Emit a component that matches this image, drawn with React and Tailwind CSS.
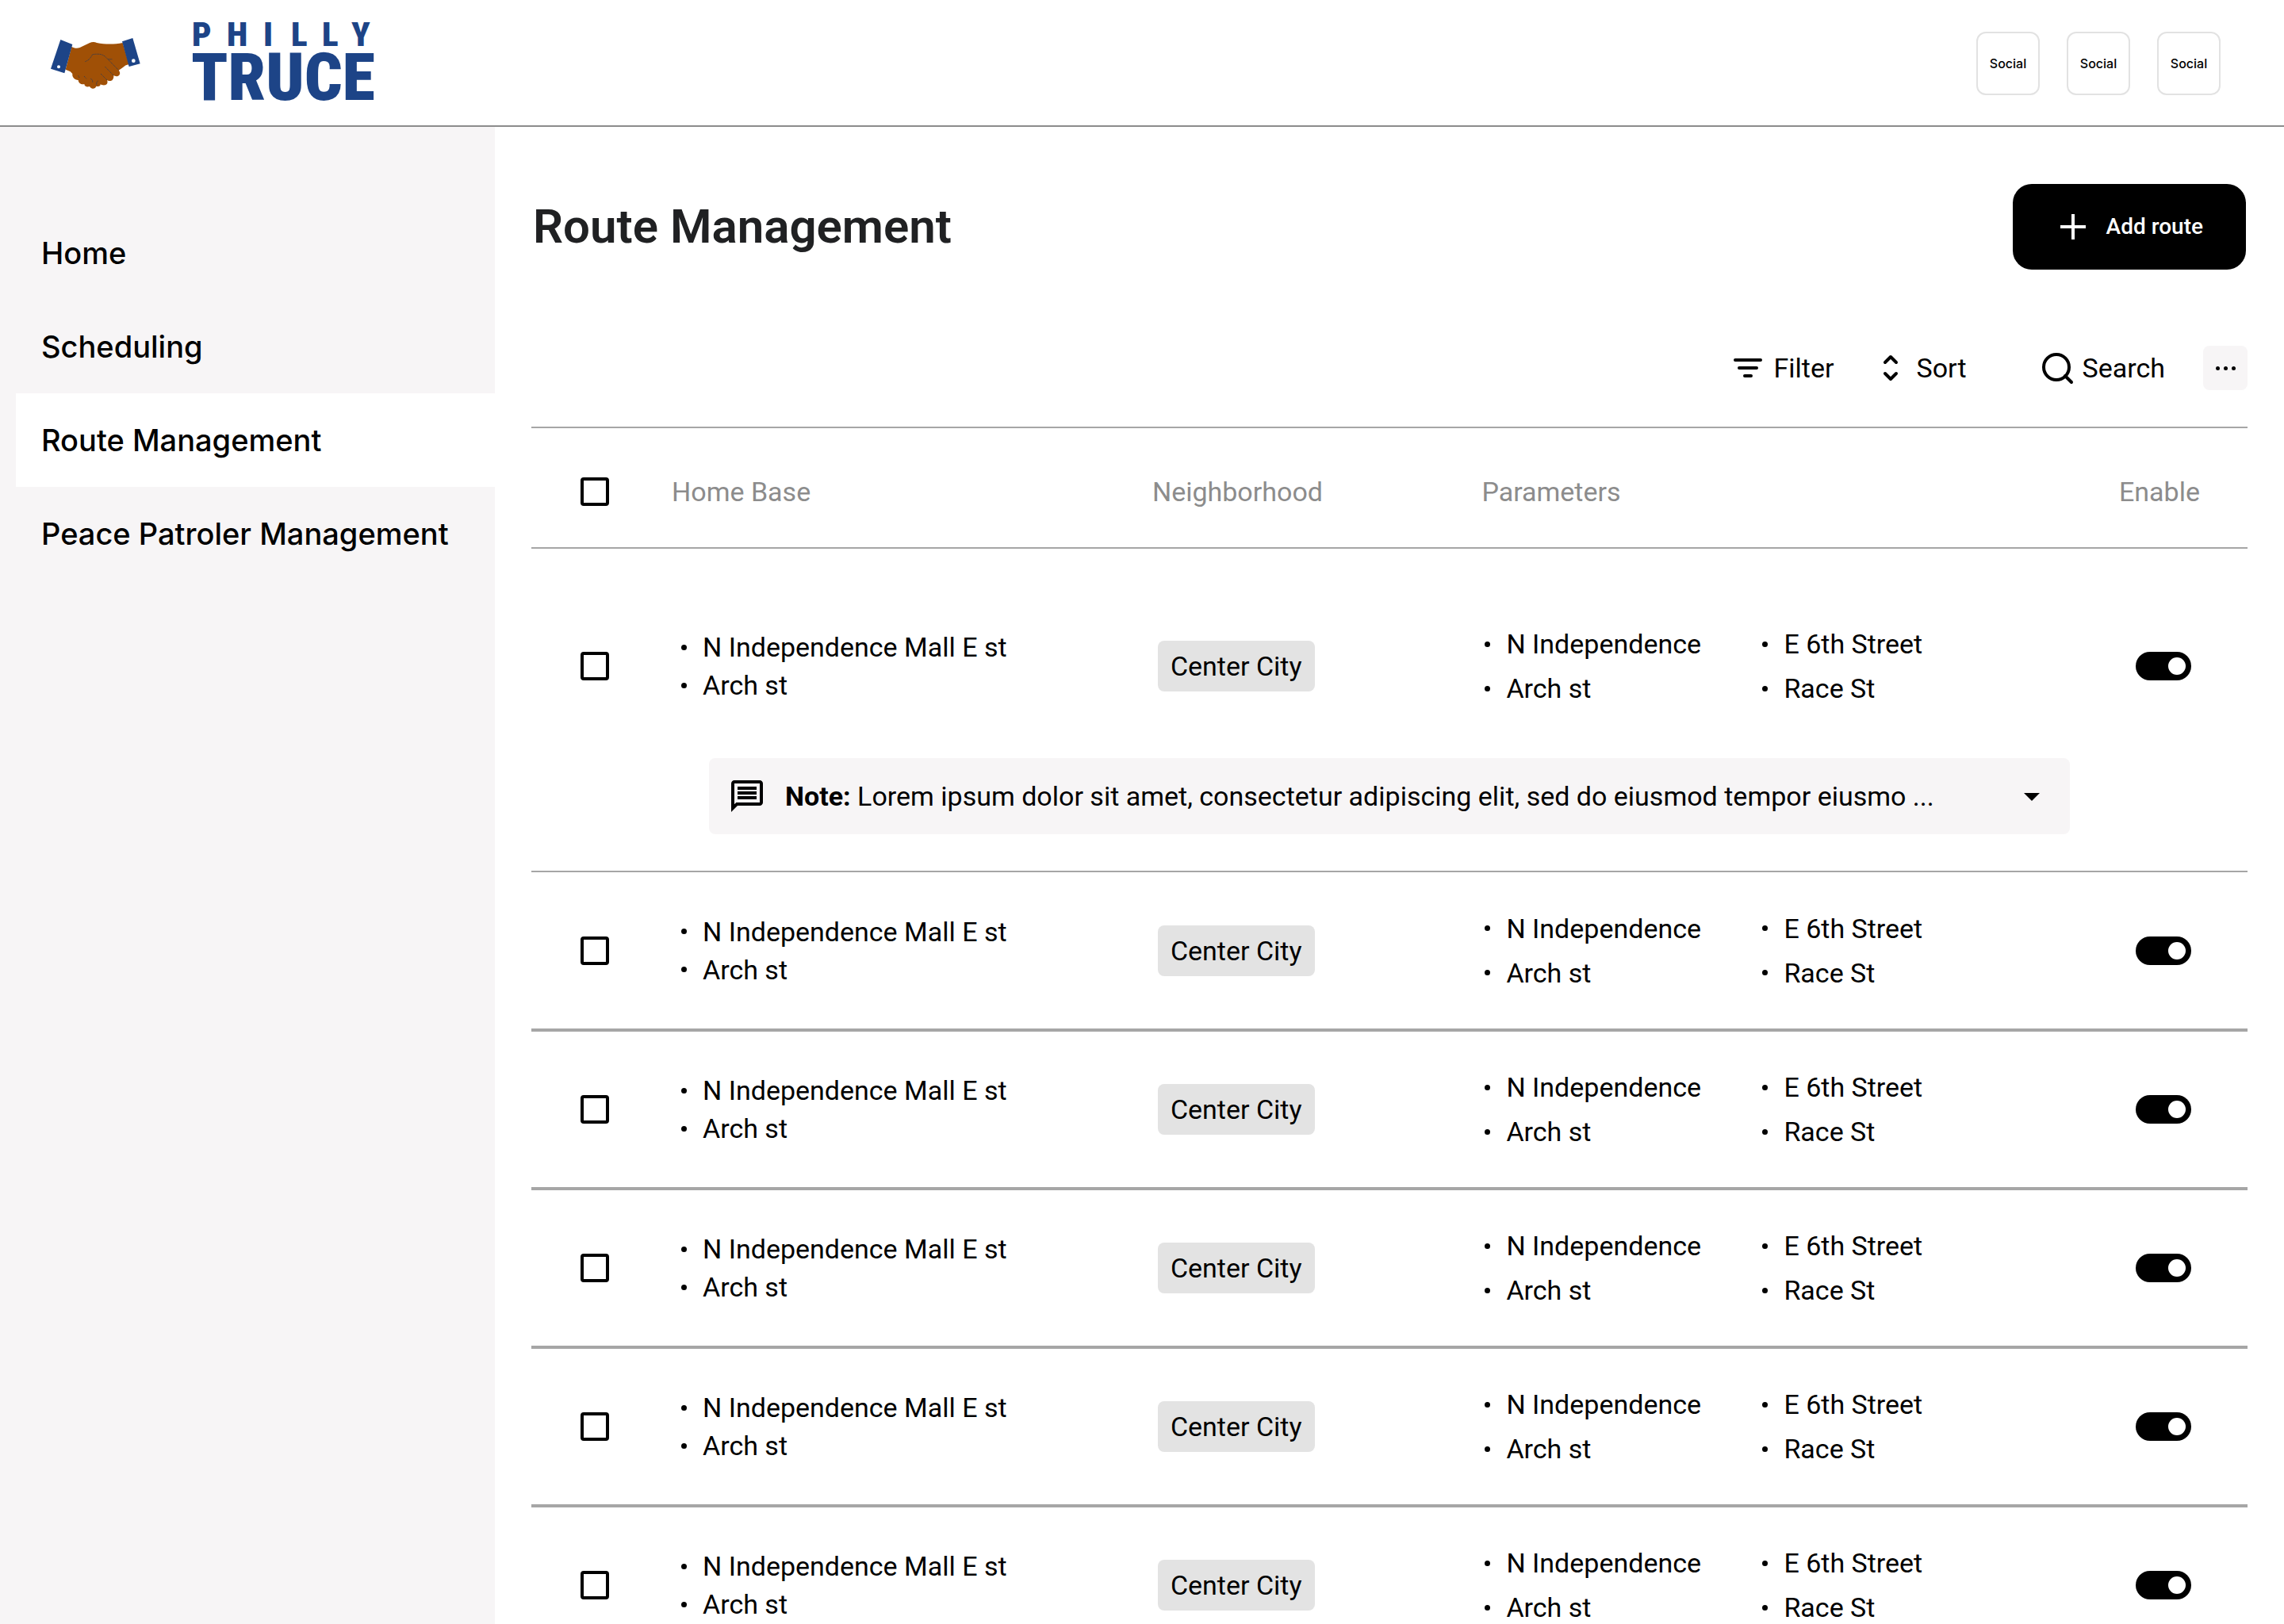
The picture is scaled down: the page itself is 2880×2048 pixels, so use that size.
import { useState } from 'react';
import { MdOutlineMessage, MdArrowDropDown } from 'react-icons/md';

const navItems = [
  { label: 'Home', href: '#home' },
  { label: 'Scheduling', href: '#scheduling' },
  { label: 'Route Management', href: '#routes', active: true },
  { label: 'Peace Patroler Management', href: '#patrolers' },
];

const route = {
  homeBase: ['N Independence Mall E st', 'Arch st'],
  neighborhood: 'Center City',
  parameters: [
    ['N Independence', 'Arch st'],
    ['E 6th Street', 'Race St'],
  ],
};

const initialRoutes = [
  {
    ...route,
    id: 1,
    note: 'Lorem ipsum dolor sit amet, consectetur adipiscing elit, sed do eiusmod tempor eiusmo ...',
  },
  { ...route, id: 2 },
  { ...route, id: 3 },
  { ...route, id: 4 },
  { ...route, id: 5 },
  { ...route, id: 6 },
];

const HandshakeLogo = () => (
  <svg viewBox="24 24 339 195" className="w-[113px] h-[65px]" aria-hidden="true">
    <path
      d="M103 56 C112 63 124 64 134 60 L170 43 C180 38 190 38 198 42 C230 48 265 48 296 42 L320 124 C310 124 302 131 296 136 L281 146 C288 153 287 163 279 167 C273 170 266 168 262 165 C263 176 259 184 251 186 C245 187 240 185 237 183 C241 193 237 200 229 202 C222 203 216 201 212 199 C212 206 206 209 196 206 C194 213 188 216 182 215 C176 214 172 210 171 207 C161 211 151 206 151 198 C141 201 129 196 128 183 C114 182 104 172 106 159 L98 151 L80 143 Z"
      fill="#a05006"
    />
    <path d="M61 30 L106 48 L76 157 L24 140 Z" fill="#1d4487" />
    <path d="M294 37 L334 24 L362 121 L320 132 Z" fill="#1d4487" />
    <circle cx="54" cy="133" r="6" fill="#fff" />
    <circle cx="337" cy="110" r="7" fill="#fff" />
    <g fill="none" stroke="#2b3a55" strokeWidth="2.5" strokeDasharray="4 2">
      <path d="M154 113 C168 108 174 100 182 86 C196 84 210 84 218 87 C228 91 234 98 240 104 L257 104" />
      <path d="M240 104 L281 146" />
      <path d="M229 132 L262 166" />
      <path d="M213 159 L237 183" />
      <path d="M128 166 L132 174" />
      <path d="M150 168 L159 178" />
      <path d="M175 178 C182 181 183 186 182 192" />
      <path d="M203 186 C197 189 196 195 198 203" />
    </g>
  </svg>
);

const Wordmark = () => (
  <svg viewBox="0 0 236 136" className="w-[236px] h-[136px]" role="img" aria-label="Philly Truce">
    <g fill="#1d4487" fontFamily="'Roboto Condensed', Roboto, sans-serif" fontWeight="900">
      <text x="1 45 91 126 165 202" y="46" fontSize="43">PHILLY</text>
      <text x="0" y="114" fontSize="84">TRUCE</text>
    </g>
  </svg>
);

const FilterIcon = () => (
  <svg viewBox="0 0 48 48" className="size-12" fill="none" stroke="currentColor" strokeWidth="4" strokeLinecap="round" aria-hidden="true">
    <path d="M8 14h32M13 24h22M20 34h8" />
  </svg>
);

const SortIcon = () => (
  <svg viewBox="0 0 48 48" className="size-12" fill="none" stroke="currentColor" strokeWidth="4" strokeLinecap="round" strokeLinejoin="round" aria-hidden="true">
    <path d="M17 17l7-7 7 7M17 31l7 7 7-7" />
  </svg>
);

const SearchIcon = () => (
  <svg viewBox="0 0 48 48" className="size-12" fill="none" stroke="currentColor" strokeWidth="4" strokeLinecap="round" aria-hidden="true">
    <circle cx="23" cy="23" r="16" />
    <path d="M34 34l8 8" />
  </svg>
);

const Header = () => (
  <header className="flex h-40 shrink-0 items-center justify-between border-b-2 border-[#8c8c8c] bg-white pt-0.5 pr-20 pl-16">
    <a href="#home" className="flex items-center gap-16">
      <HandshakeLogo />
      <Wordmark />
    </a>
    <div className="flex gap-[34px]">
      {[1, 2, 3].map((n) => (
        <a
          key={n}
          href="#social"
          className="flex size-20 items-center justify-center rounded-xl border-2 border-[#e2e2e2] font-[Inter] text-base font-medium"
        >
          Social
        </a>
      ))}
    </div>
  </header>
);

const Sidebar = () => (
  <nav className="w-[624px] shrink-0 bg-[#f7f5f6] pt-[100px] pl-5">
    {navItems.map((item) => (
      <a
        key={item.label}
        href={item.href}
        className={`flex h-[118px] items-center pl-8 font-[Inter] text-[38px] font-medium whitespace-nowrap ${item.active ? 'bg-white' : ''}`}
      >
        {item.label}
      </a>
    ))}
  </nav>
);

const Checkbox = ({ label }) => (
  <input
    type="checkbox"
    aria-label={label}
    className="block size-9 appearance-none rounded-sm border-4 border-black checked:bg-black"
  />
);

const Toggle = ({ label, checked, onChange }) => (
  <input
    type="checkbox"
    role="switch"
    aria-label={label}
    checked={checked}
    onChange={onChange}
    className="flex h-9 w-[70px] appearance-none items-center rounded-full bg-gray-400 px-[7px] before:size-[22px] before:rounded-full before:bg-white checked:justify-end checked:bg-black"
  />
);

const BulletList = ({ items, className }) => (
  <ul className={className}>
    {items.map((item) => (
      <li key={item} className="flex items-center gap-5 whitespace-nowrap">
        <span className="size-[7px] rounded-full bg-black" />
        {item}
      </li>
    ))}
  </ul>
);

const RouteRows = ({ data, enabled, onToggle }) => (
  <>
    <tr className={data.note ? 'h-[265px]' : 'h-[200px] border-b-4 border-[#a6a6a6]'}>
      <td className={`pl-[62px] ${data.note ? 'pt-8' : ''}`}>
        <Checkbox label={`Select route ${data.id}`} />
      </td>
      <td className={`pl-3 ${data.note ? 'pt-8' : ''}`}>
        <BulletList items={data.homeBase} className="leading-[48px]" />
      </td>
      <td className={`pl-[7px] ${data.note ? 'pt-8' : ''}`}>
        <span className="inline-block rounded-lg bg-[#e3e3e3] px-4 leading-[64px] whitespace-nowrap">
          {data.neighborhood}
        </span>
      </td>
      <td className={`pl-1 ${data.note ? 'pt-8' : ''}`}>
        <div className="flex leading-[56px]">
          {data.parameters.map((items) => (
            <BulletList key={items[0]} items={items} className="w-[350px]" />
          ))}
        </div>
      </td>
      <td className={`pl-[21px] ${data.note ? 'pt-8' : ''}`}>
        <Toggle label={`Enable route ${data.id}`} checked={enabled} onChange={onToggle} />
      </td>
    </tr>
    {data.note && (
      <tr className="border-b-2 border-[#a6a6a6]">
        <td colSpan={5} className="px-56 pb-[46px]">
          <button className="flex h-24 w-full items-center rounded-lg bg-[#f7f5f6] px-6 text-left">
            <MdOutlineMessage className="size-12 shrink-0" />
            <span className="ml-6 grow truncate">
              <b>Note:</b> {data.note}
            </span>
            <MdArrowDropDown className="size-12 shrink-0" />
          </button>
        </td>
      </tr>
    )}
  </>
);

const App = () => {
  const [disabled, setDisabled] = useState([]);

  const toggleRoute = (id) => {
    setDisabled((ids) => (ids.includes(id) ? ids.filter((i) => i !== id) : [...ids, id]));
  };

  return (
    <div className="flex h-screen flex-col overflow-hidden bg-white font-[Roboto] text-[34px] leading-[48px] text-black">
      <Header />
      <div className="flex min-h-0 grow">
        <Sidebar />
        <main className="min-w-0 grow overflow-hidden px-[46px] pt-[72px]">
          <div className="flex items-center justify-between px-0.5">
            <h1 className="text-6xl font-semibold text-[#202123]">Route Management</h1>
            <button className="flex h-[108px] items-center gap-[26px] rounded-3xl bg-black pr-[54px] pl-[60px] text-[28px] font-medium text-white">
              <svg viewBox="0 0 32 32" className="size-8" stroke="currentColor" strokeWidth="4" aria-hidden="true">
                <path d="M16 0v32M0 16h32" />
              </svg>
              Add route
            </button>
          </div>

          {/* Toolbar */}
          <div className="mt-24 flex items-center justify-end">
            <button className="flex items-center gap-2">
              <FilterIcon />
              Filter
            </button>
            <button className="ml-12 flex items-center gap-2">
              <SortIcon />
              Sort
            </button>
            <button className="ml-[90px] flex items-center gap-2">
              <SearchIcon />
              Search
            </button>
            <button aria-label="More options" className="ml-12 flex size-14 items-center justify-center gap-[5px] rounded-lg bg-[#f7f5f6]">
              <span className="size-[5px] rounded-full bg-black" />
              <span className="size-[5px] rounded-full bg-black" />
              <span className="size-[5px] rounded-full bg-black" />
            </button>
          </div>

          {/* Routes table */}
          <table className="mt-[46px] w-full table-fixed border-collapse">
            <colgroup>
              <col className="w-[177px]" />
              <col className="w-[28%]" />
              <col className="w-[19.2%]" />
              <col />
              <col className="w-[162px]" />
            </colgroup>
            <thead>
              <tr className="h-[152px] border-y-2 border-[#a6a6a6] text-left text-[#8c8c8c]">
                <th className="pt-2.5 pl-[62px]">
                  <Checkbox label="Select all routes" />
                </th>
                <th className="pt-2.5 font-normal">Home Base</th>
                <th className="pt-2.5 font-normal">Neighborhood</th>
                <th className="pt-2.5 font-normal">Parameters</th>
                <th className="pt-2.5 font-normal">Enable</th>
              </tr>
            </thead>
            <tbody>
              {initialRoutes.map((data) => (
                <RouteRows
                  key={data.id}
                  data={data}
                  enabled={!disabled.includes(data.id)}
                  onToggle={() => toggleRoute(data.id)}
                />
              ))}
            </tbody>
          </table>
        </main>
      </div>
    </div>
  );
};

export default App;
